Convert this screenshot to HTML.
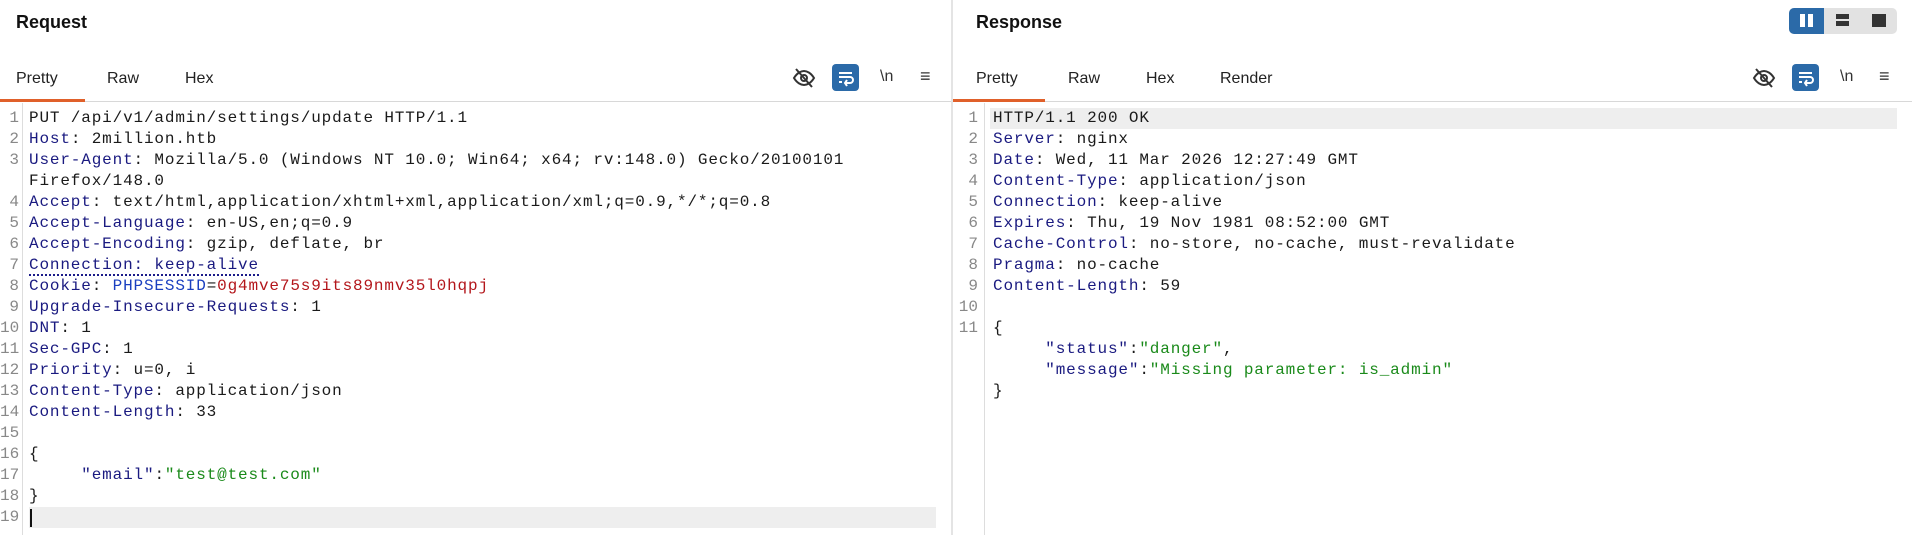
<!DOCTYPE html>
<html><head><meta charset="utf-8"><style>
*{margin:0;padding:0;box-sizing:border-box}
body{width:1912px;height:535px;background:#fff;position:relative;overflow:hidden;font-family:"Liberation Sans",sans-serif;color:#111}
.abs{position:absolute}
.title{font-weight:bold;font-size:18px;top:12px}
.tab{font-size:16px;top:70px;color:#222}
.code{font-family:"Liberation Mono",monospace;font-size:16px;letter-spacing:0.85px;line-height:21px;white-space:pre;color:#1a1a1a}
.num{font-family:"Liberation Mono",monospace;font-size:16px;line-height:21px;color:#888;text-align:right;white-space:pre}
.k{color:#1a1a80}.r{color:#b3161b}.g{color:#1a8a1a}.p{color:#1a3fc0}
.hl{background:#eeeeee}
</style></head><body>
<div class="abs title" style="left:16px">Request</div>
<div class="abs title" style="left:976px">Response</div>
<div class="abs" style="left:1789px;top:8px;width:108px;height:26px;background:#e2e2e2;border-radius:5px"></div>
<div class="abs" style="left:1789px;top:8px;width:35px;height:26px;background:#2b6aa8;border-radius:5px 0 0 5px"></div>
<div class="abs" style="left:1800px;top:14px;width:5px;height:13px;background:#fff"></div>
<div class="abs" style="left:1808px;top:14px;width:5px;height:13px;background:#fff"></div>
<div class="abs" style="left:1836px;top:14px;width:13px;height:5px;background:#333"></div>
<div class="abs" style="left:1836px;top:21px;width:13px;height:5px;background:#333"></div>
<div class="abs" style="left:1872px;top:14px;width:14px;height:13px;background:#333"></div>
<div class="abs tab" style="left:16px">Pretty</div>
<div class="abs tab" style="left:107px">Raw</div>
<div class="abs tab" style="left:185px">Hex</div>
<div class="abs tab" style="left:976px">Pretty</div>
<div class="abs tab" style="left:1068px">Raw</div>
<div class="abs tab" style="left:1146px">Hex</div>
<div class="abs tab" style="left:1220px">Render</div>
<div class="abs" style="left:0;top:101px;width:1912px;height:1px;background:#d8d8d8"></div>
<div class="abs" style="left:0;top:99px;width:85px;height:3px;background:#e0602a"></div>
<div class="abs" style="left:953px;top:99px;width:92px;height:3px;background:#e0602a"></div>
<div class="abs" style="left:951px;top:0;width:2px;height:535px;background:#e4e4e4"></div>
<svg class="abs" style="left:792px;top:66px" width="24" height="24" viewBox="0 0 24 24" fill="none" stroke="#333" stroke-width="2"><path d="M2 12c3-5 7-7 10-7s7 2 10 7c-3 5-7 7-10 7s-7-2-10-7z"/><circle cx="12" cy="12" r="3"/><path d="M4 3l16 18"/></svg>
<div class="abs" style="left:832px;top:64px;width:27px;height:27px;background:#2b6aa8;border-radius:4px"></div>
<svg class="abs" style="left:836px;top:68px" width="19" height="19" viewBox="0 0 19 19" fill="none" stroke="#fff" stroke-width="2"><path d="M3 5h13M3 9h11a3 3 0 0 1 0 6h-5M11 12l-2 3 2 3M3 14h3"/></svg>
<div class="abs" style="left:880px;top:68px;font-size:16px;color:#333">\n</div>
<div class="abs" style="left:920px;top:66px;font-size:18px;color:#333">≡</div>
<svg class="abs" style="left:1752px;top:66px" width="24" height="24" viewBox="0 0 24 24" fill="none" stroke="#333" stroke-width="2"><path d="M2 12c3-5 7-7 10-7s7 2 10 7c-3 5-7 7-10 7s-7-2-10-7z"/><circle cx="12" cy="12" r="3"/><path d="M4 3l16 18"/></svg>
<div class="abs" style="left:1792px;top:64px;width:27px;height:27px;background:#2b6aa8;border-radius:4px"></div>
<svg class="abs" style="left:1796px;top:68px" width="19" height="19" viewBox="0 0 19 19" fill="none" stroke="#fff" stroke-width="2"><path d="M3 5h13M3 9h11a3 3 0 0 1 0 6h-5M11 12l-2 3 2 3M3 14h3"/></svg>
<div class="abs" style="left:1840px;top:68px;font-size:16px;color:#333">\n</div>
<div class="abs" style="left:1879px;top:66px;font-size:18px;color:#333">≡</div>
<div class="abs" style="left:22px;top:103px;width:1px;height:432px;background:#ddd"></div>
<div class="abs hl" style="left:29px;top:507px;width:907px;height:21px"></div>
<div class="abs" style="left:30px;top:509px;width:2px;height:18px;background:#111"></div>
<div class="abs num" style="left:0;top:108px;width:19px">1
2
3

4
5
6
7
8
9
10
11
12
13
14
15
16
17
18
19</div>
<div class="abs code" style="left:29px;top:108px">PUT /api/v1/admin/settings/update HTTP/1.1
<span class="k">Host</span>: 2million.htb
<span class="k">User-Agent</span>: Mozilla/5.0 (Windows NT 10.0; Win64; x64; rv:148.0) Gecko/20100101
Firefox/148.0
<span class="k">Accept</span>: text/html,application/xhtml+xml,application/xml;q=0.9,*/*;q=0.8
<span class="k">Accept-Language</span>: en-US,en;q=0.9
<span class="k">Accept-Encoding</span>: gzip, deflate, br
<span class="k" style="border-bottom:2px dotted #1c1c8a">Connection: keep-alive</span>
<span class="k">Cookie</span>: <span class="p">PHPSESSID</span>=<span class="r">0g4mve75s9its89nmv35l0hqpj</span>
<span class="k">Upgrade-Insecure-Requests</span>: 1
<span class="k">DNT</span>: 1
<span class="k">Sec-GPC</span>: 1
<span class="k">Priority</span>: u=0, i
<span class="k">Content-Type</span>: application/json
<span class="k">Content-Length</span>: 33

{
     <span class="k">"email"</span>:<span class="g">"test@test.com"</span>
}
</div>
<div class="abs" style="left:984px;top:103px;width:1px;height:432px;background:#ddd"></div>
<div class="abs hl" style="left:990px;top:108px;width:907px;height:21px"></div>
<div class="abs num" style="left:955px;top:108px;width:23px">1
2
3
4
5
6
7
8
9
10
11</div>
<div class="abs code" style="left:993px;top:108px">HTTP/1.1 200 OK
<span class="k">Server</span>: nginx
<span class="k">Date</span>: Wed, 11 Mar 2026 12:27:49 GMT
<span class="k">Content-Type</span>: application/json
<span class="k">Connection</span>: keep-alive
<span class="k">Expires</span>: Thu, 19 Nov 1981 08:52:00 GMT
<span class="k">Cache-Control</span>: no-store, no-cache, must-revalidate
<span class="k">Pragma</span>: no-cache
<span class="k">Content-Length</span>: 59

{
     <span class="k">"status"</span>:<span class="g">"danger"</span>,
     <span class="k">"message"</span>:<span class="g">"Missing parameter: is_admin"</span>
}</div>
</body></html>
